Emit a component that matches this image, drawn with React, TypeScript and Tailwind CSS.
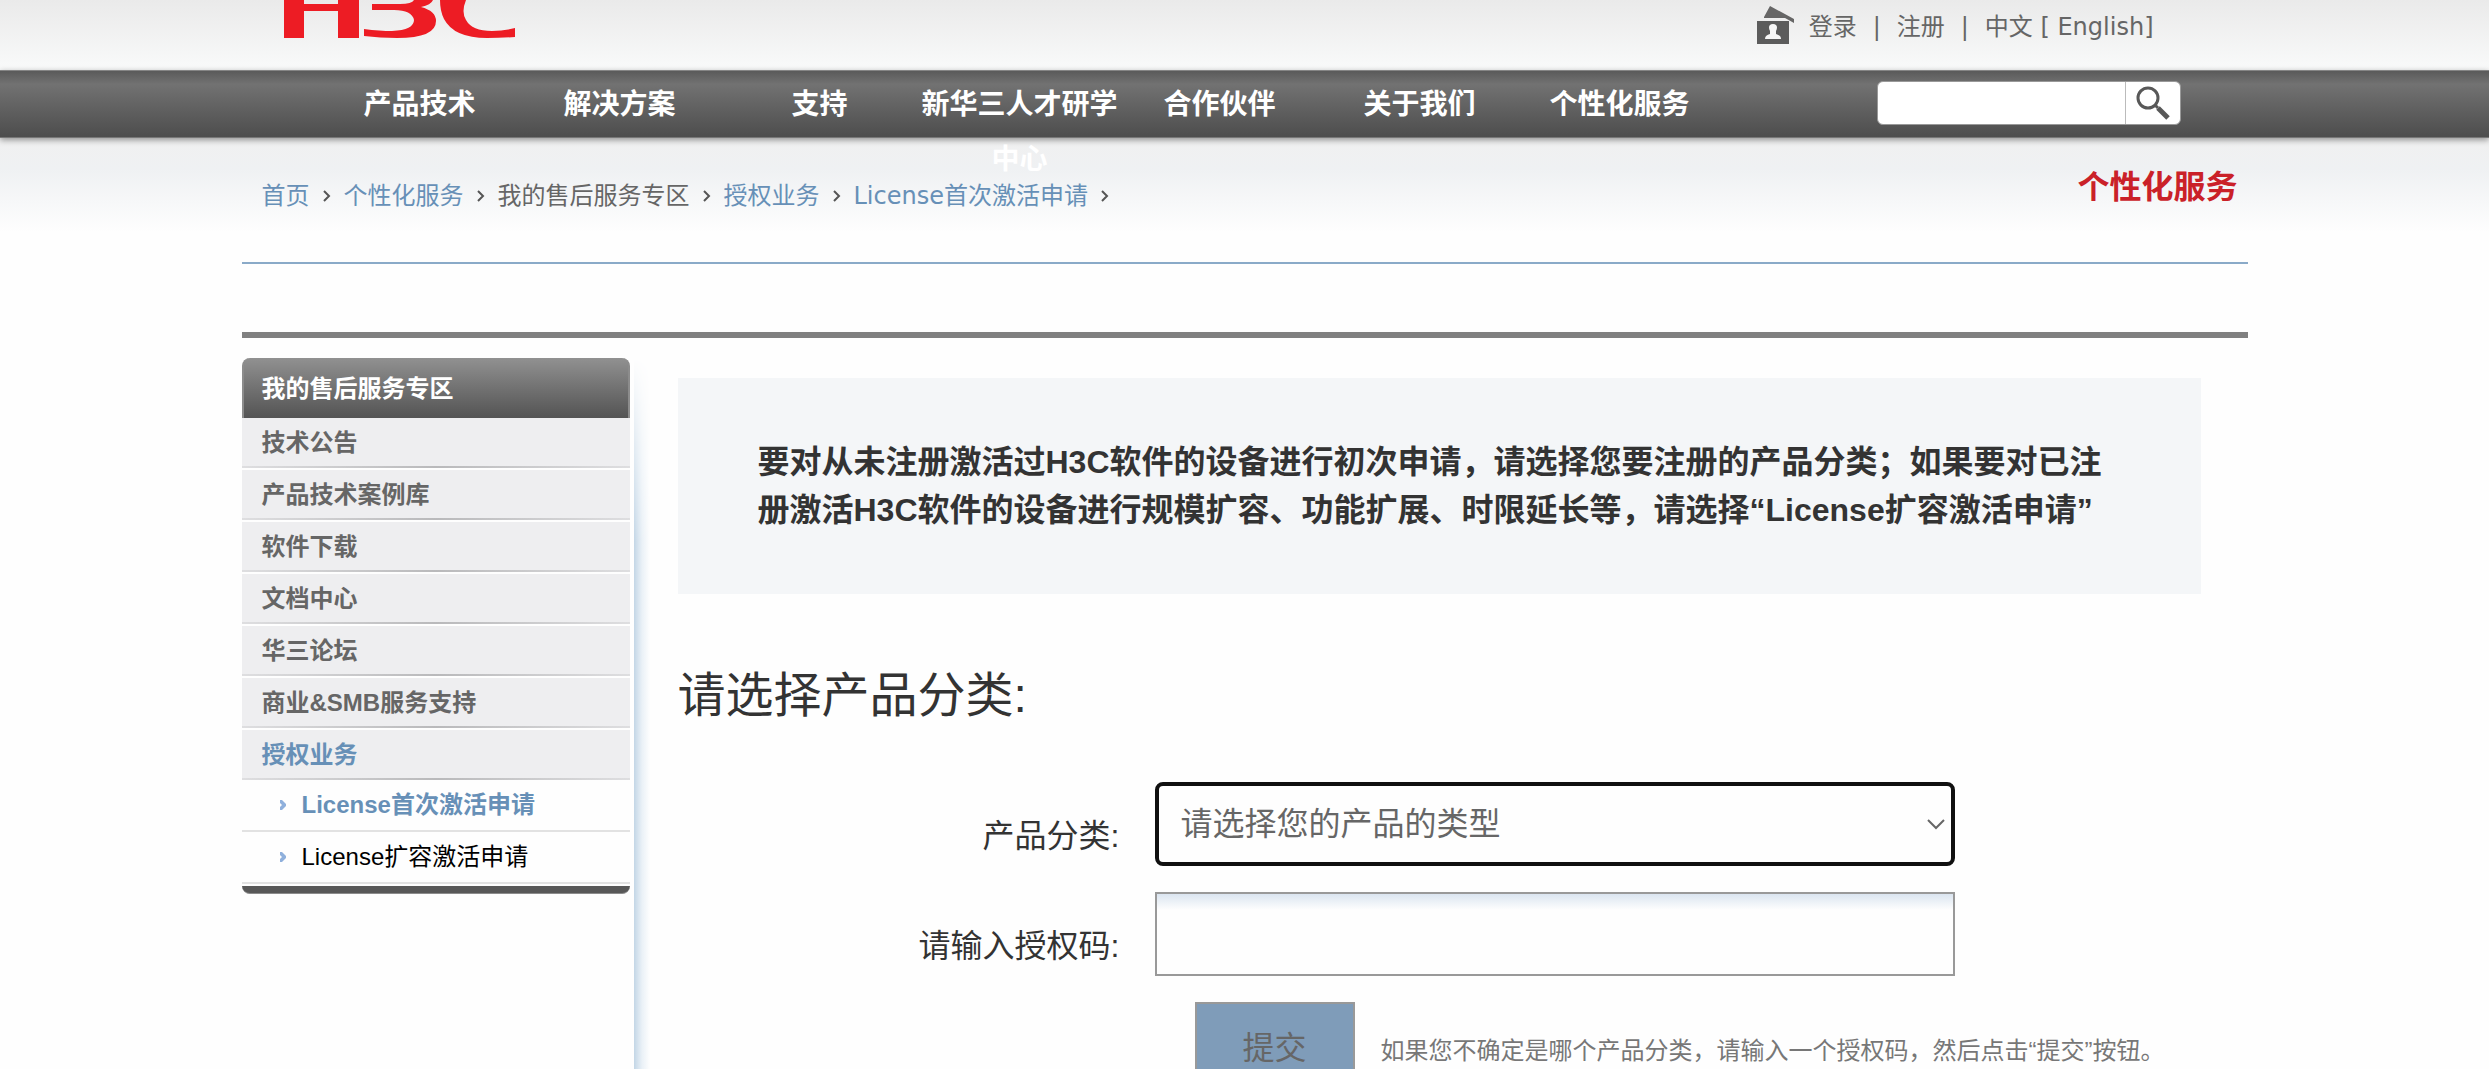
import { useState } from 'react';

const NAV = ['产品技术', '解决方案', '支持', '新华三人才研学中心', '合作伙伴', '关于我们', '个性化服务'];

const CRUMBS = [
  { label: '首页', link: true },
  { label: '个性化服务', link: true },
  { label: '我的售后服务专区', link: false },
  { label: '授权业务', link: true },
  { label: 'License首次激活申请', link: true },
];

const MENU = ['技术公告', '产品技术案例库', '软件下载', '文档中心', '华三论坛', '商业&SMB服务支持', '授权业务'];
const SUB_MENU = ['License首次激活申请', 'License扩容激活申请'];

const PRODUCTS = ['请选择您的产品的类型', '路由器', '交换机', '无线', '安全'];

function Logo() {
  return (
    <svg width="232" height="39" viewBox="0 0 232 39" fill="#ed1c24" role="img" aria-label="H3C">
      <path d="M0 0H20V4H54V0H75V38H54V11H20V38H0Z" />
      <path d="M88 4H116Q128 4 130 0H149Q147 5 137 7Q152 11 152 21Q152 38 113 38Q96 38 80 36V29Q96 31 108 31Q130 30 130 20Q128 10 110 10H88Z" />
      <path d="M156 0H182Q177 12 182 20Q188 31 208 31Q220 31 231 28V37Q216 38 203 38Q170 38 160 19Q156 11 156 0Z" />
    </svg>
  );
}

function UserIcon() {
  return (
    <svg width="40" height="38" viewBox="0 0 40 38" aria-hidden="true">
      <path d="M9 11L15 0L39 13V17L30 12H9Z" fill="#666" />
      <path d="M2 15H34V38H2Z" fill="#5c5c5c" />
      <path d="M18 18C22 18 23 21 21 25V28C24 29 26 30 26 33H10C10 30 12 29 15 28V25C13 21 14 18 18 18Z" fill="#f7f7f7" />
    </svg>
  );
}

function SearchIcon() {
  return (
    <svg width="36" height="36" viewBox="0 0 36 36" fill="none" stroke="#585858" aria-hidden="true">
      <circle cx="13" cy="13" r="10" strokeWidth="3" />
      <path d="M20 20L23 23" strokeWidth="3" />
      <path d="M23 23L33 33" strokeWidth="5" />
    </svg>
  );
}

function CrumbArrow() {
  return (
    <svg width="8" height="12" viewBox="0 0 8 12" fill="none" stroke="#555" strokeWidth="2" aria-hidden="true">
      <path d="M1 1L6 6L1 11" />
    </svg>
  );
}

function Header() {
  return (
    <header className="bg-linear-to-b from-[#eaeaea] to-[#f9fafa]">
      <div className="mx-auto flex h-[70px] max-w-[2006px] items-start justify-between pr-[94px] pl-[42px]">
        <Logo />
        <div className="flex items-start gap-[14px] pt-[6px] font-['DejaVu_Sans','Noto_Sans_CJK_SC',sans-serif] text-2xl text-[#666]">
          <UserIcon />
          <div className="flex gap-4 leading-[42px] whitespace-pre">
            <a href="#login">登录</a>
            <span>|</span>
            <a href="#register">注册</a>
            <span>|</span>
            <span>
              中文 [ <a href="#en">English</a>]
            </span>
          </div>
        </div>
      </div>
    </header>
  );
}

function NavBar() {
  return (
    <nav className="relative h-[68px] border-t border-b border-t-[#858585] border-b-[#777] bg-linear-to-b from-[#5a5a5a] via-[#727272] via-20% to-[#4d4d4d] shadow-[0_2px_6px_rgba(0,0,0,0.4)]">
      <div className="mx-auto flex max-w-[2006px] items-start justify-between pr-[67px] pl-[78px]">
        <ul className="flex pt-[6px] text-center text-[28px] leading-[55px] font-bold text-white">
          {NAV.map((item) => (
            <li key={item} className="w-[200px]">
              <a href="#nav">{item}</a>
            </li>
          ))}
        </ul>
        <form className="mt-[10px] flex h-11 w-[304px] overflow-hidden rounded-md border border-[#999] bg-white">
          <input type="search" aria-label="搜索" className="min-w-0 flex-1 px-2 text-2xl outline-none" />
          <button type="button" aria-label="搜索" className="flex w-[55px] items-center justify-center border-l border-[#bbb]">
            <SearchIcon />
          </button>
        </form>
      </div>
    </nav>
  );
}

function Breadcrumb() {
  return (
    <div className="bg-linear-to-b from-[#f0f0f0] via-[#eff1f3] via-25% to-[#fefefe] to-75%">
      <div className="mx-auto flex h-[126px] max-w-[2006px] items-start justify-between border-b-2 border-[#8aaac8] pr-[10px] pl-5">
        <ol className="flex pt-10 font-['DejaVu_Sans','Noto_Sans_CJK_SC',sans-serif] text-2xl leading-9 text-[#666]">
          {CRUMBS.map((c) => (
            <li key={c.label} className="flex items-center">
              {c.link ? (
                <a href="#crumb" className="text-[#6790b7]">
                  {c.label}
                </a>
              ) : (
                c.label
              )}
              <span className="flex w-[34px] justify-center">
                <CrumbArrow />
              </span>
            </li>
          ))}
        </ol>
        <h1 className="pt-6 text-[32px] leading-[50px] font-bold text-[#ca2128]">个性化服务</h1>
      </div>
    </div>
  );
}

function SideMenu() {
  const active = '授权业务';

  return (
    <aside className="w-[388px] shrink-0 text-2xl">
      <h2 className="rounded-t-lg border-x-2 border-[#8c8c8c] bg-linear-to-b from-[#919191] to-[#545454] pt-[2px] pl-[18px] leading-[58px] font-bold text-white">
        我的售后服务专区
      </h2>
      <ul className="flex flex-col gap-[2px] font-bold text-[#666]">
        {MENU.map((item) => (
          <li key={item} className="bg-[#eeeef0]">
            <a
              href="#menu"
              className={item === active ? 'block pt-[2px] pl-5 leading-[46px] text-[#6790b7]' : 'block pt-[2px] pl-5 leading-[46px]'}
            >
              {item}
            </a>
            <div className="h-[2px] bg-linear-to-r from-[#dedee0] via-[#b9b9bb] to-[#dedee0]" />
          </li>
        ))}
      </ul>
      <ul>
        {SUB_MENU.map((item, i) => (
          <li key={item} className="flex items-center gap-4 border-b-2 border-[#e2e2e2] pl-[38px]">
            <svg width="6" height="10" viewBox="0 0 6 10" aria-hidden="true">
              <path d="M0 0H2L6 4V6L2 10H0V7L2 5L0 3Z" fill="#8fb0dc" />
            </svg>
            <a href="#sub" className={i === 0 ? 'leading-[50px] font-bold text-[#6790b7]' : 'leading-[50px] text-black'}>
              {item}
            </a>
          </li>
        ))}
      </ul>
      <div className="mt-[2px] h-2 rounded-b-lg border-b border-[#8c8c8c] bg-[#585858]" />
    </aside>
  );
}

function LicenseForm() {
  const [product, setProduct] = useState(PRODUCTS[0]);
  const [code, setCode] = useState('');

  return (
    <form className="mt-[50px] grid grid-cols-[442px_minmax(0,800px)] gap-x-[35px] gap-y-[26px] text-[32px] text-[#333]">
      <label htmlFor="product" className="pt-6 text-right leading-[60px]">
        产品分类:
      </label>
      <div className="relative">
        <select
          id="product"
          value={product}
          onChange={(e) => setProduct(e.target.value)}
          className="h-[84px] w-full appearance-none rounded-lg border-4 border-[#101010] bg-[#fefefe] px-[22px] text-[#666] outline-none"
        >
          {PRODUCTS.map((p) => (
            <option key={p}>{p}</option>
          ))}
        </select>
        <svg
          className="pointer-events-none absolute top-[37px] right-[10px]"
          width="18"
          height="11"
          viewBox="0 0 18 11"
          fill="none"
          stroke="#666"
          strokeWidth="2"
          aria-hidden="true"
        >
          <path d="M1 1L9 9L17 1" />
        </svg>
      </div>
      <label htmlFor="code" className="pt-6 text-right leading-[60px]">
        请输入授权码:
      </label>
      <input
        id="code"
        type="text"
        value={code}
        onChange={(e) => setCode(e.target.value)}
        className="h-[84px] w-full border-2 border-[#999] bg-[#fefefe] bg-linear-to-b from-[#dbe5f0] to-[#fefefe] to-20% px-[22px] text-[#666] outline-none"
      />
      <div className="col-start-2 flex items-start gap-[26px] pl-10">
        <button type="button" className="h-[92px] w-40 shrink-0 border-2 border-[#999] bg-[#7f9cb9] text-[#666]">
          提交
        </button>
        <p className="shrink-0 pt-6 text-2xl leading-[50px] whitespace-nowrap text-[#777]">
          如果您不确定是哪个产品分类，请输入一个授权码，然后点击“提交”按钮。
        </p>
      </div>
    </form>
  );
}

export default function App() {
  return (
    <div className="flex h-screen flex-col overflow-hidden bg-[#fefefe] font-['Liberation_Sans','Noto_Sans_CJK_SC',sans-serif]">
      <Header />
      <NavBar />
      <Breadcrumb />
      <div className="mx-auto flex w-full max-w-[2006px] flex-1 flex-col pt-[68px]">
        <div className="h-[6px] shrink-0 bg-[#808080]" />
        <div className="flex flex-1 pt-5">
          <SideMenu />
          <div className="ml-1 w-4 shrink-0 bg-linear-to-r from-[#c3d6e6] via-[#eaf1f7] via-50% to-[#fefefe] mask-t-from-75%" />
          <main className="min-w-0 flex-1 pt-5 pr-[47px] pl-7">
            <p className="bg-[#f4f6f8] px-20 py-[60px] text-[32px] leading-[48px] font-bold text-[#333]">
              要对从未注册激活过H3C软件的设备进行初次申请，请选择您要注册的产品分类；如果要对已注册激活H3C软件的设备进行规模扩容、功能扩展、时限延长等，请选择“License扩容激活申请”
            </p>
            <h2 className="mt-[66px] text-5xl leading-[72px] text-[#333]">请选择产品分类:</h2>
            <LicenseForm />
          </main>
        </div>
      </div>
    </div>
  );
}
